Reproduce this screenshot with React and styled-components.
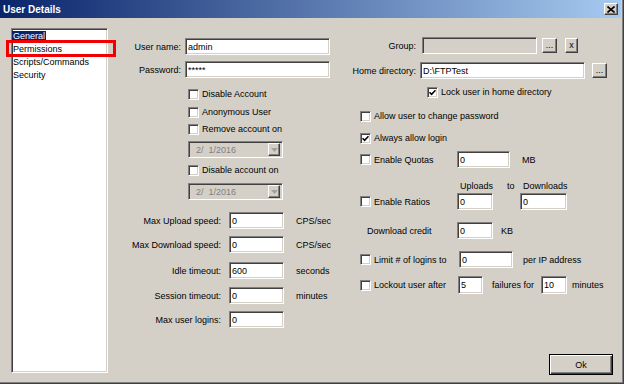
import React from 'react';
import styled, { createGlobalStyle, css } from 'styled-components';

const GlobalStyle = createGlobalStyle`
  body {
    margin: 0;
    background: #d4d0c8;
  }
  * {
    box-sizing: border-box;
  }
`;

//Classic 3D borders
const sunken = css`
  border: 1px solid;
  border-color: #808080 #ffffff #ffffff #808080;
  box-shadow: inset 1px 1px 0 #404040, inset -1px -1px 0 #d4d0c8;
`;
const raised = css`
  border: 1px solid;
  border-color: #ffffff #404040 #404040 #ffffff;
  box-shadow: inset -1px -1px 0 #808080, inset 1px 1px 0 #d4d0c8;
`;

const Window = styled.div`
  width: 624px;
  height: 384px;
  display: flex;
  flex-direction: column;
  background: #d4d0c8;
  font-family: "Liberation Sans", Arial, sans-serif;
  font-size: 9px;
  color: #000;
  box-shadow: inset -1px -1px 0 #404040, inset -2px -2px 0 #808080;
  overflow: hidden;
`;

const TitleBar = styled.div`
  height: 18px;
  flex: none;
  margin-right: 3px;
  padding: 0 3px 0 3px;
  display: flex;
  align-items: center;
  justify-content: space-between;
  background: linear-gradient(to right, #0a246a, #a6caf0);
`;

const Title = styled.span`
  color: #fff;
  font-weight: bold;
  font-size: 10px;
`;

const CloseButton = styled.div`
  ${raised};
  width: 14px;
  height: 12px;
  background: #d4d0c8;
  display: flex;
  align-items: center;
  justify-content: center;
`;

const Body = styled.div`
  flex: 1;
  display: flex;
  padding: 10px 11px 9px 11px;
`;

const Tree = styled.div`
  ${sunken};
  width: 97px;
  height: 345px;
  flex: none;
  background: #fff;
  padding-top: 1px;
`;

const TreeItem = styled.div`
  position: relative;
  height: 13px;
  line-height: 13px;
  white-space: nowrap;
  span {
    display: inline-block;
    line-height: 11px;
    padding: 0 1px;
    vertical-align: middle;
    background: ${p => (p.$selected ? '#0a246a' : 'transparent')};
    color: ${p => (p.$selected ? '#fff' : '#000')};
  }
`;

const Marker = styled.i`
  position: absolute;
  left: -6px;
  top: -3px;
  width: 110px;
  height: 17px;
  border: 3px solid #f00000;
  pointer-events: none;
`;

const Content = styled.div`
  flex: 1;
  margin-left: 10px;
  display: flex;
  flex-direction: column;
`;

const Columns = styled.div`
  display: flex;
`;

const Column = styled.div`
  width: ${p => (p.$w ? `${p.$w}px` : 'auto')};
  flex: ${p => (p.$w ? 'none' : '1')};
  display: flex;
  flex-direction: column;
`;

const Row = styled.div`
  display: flex;
  align-items: center;
  height: ${p => p.$h || 17}px;
  margin-top: ${p => p.$top || 0}px;
  padding-left: ${p => p.$indent || 0}px;
  white-space: nowrap;
`;

const Label = styled.span`
  flex: none;
  width: ${p => (p.$w ? `${p.$w}px` : 'auto')};
  margin-right: ${p => p.$gap || 0}px;
  text-align: ${p => (p.$right ? 'right' : 'left')};
`;

const TextBox = styled.input`
  ${sunken};
  flex: none;
  width: ${p => p.$w}px;
  height: ${p => p.$h || 17}px;
  margin: 0 ${p => p.$gap || 0}px 0 0;
  padding: 0 2px;
  background: ${p => (p.$disabled ? '#d4d0c8' : '#fff')};
  font: inherit;
  color: #000;
  outline: none;
`;

const SmallButton = styled.div`
  ${raised};
  flex: none;
  width: ${p => p.$w}px;
  height: 15px;
  margin-right: ${p => p.$gap || 0}px;
  display: flex;
  align-items: center;
  justify-content: center;
  line-height: 1;
`;

const CheckWrap = styled.label`
  flex: none;
  display: flex;
  align-items: center;
  width: ${p => (p.$w ? `${p.$w}px` : 'auto')};
`;

const Box = styled.span`
  ${sunken};
  width: 11px;
  height: 11px;
  margin-right: 3px;
  background: #fff;
  display: flex;
  align-items: center;
  justify-content: center;
`;

const Combo = styled.div`
  ${sunken};
  width: 95px;
  height: 17px;
  padding: 0 2px 0 7px;
  display: flex;
  align-items: center;
  justify-content: space-between;
  background: #d4d0c8;
  color: #808080;
  white-space: pre;
`;

const ComboButton = styled.div`
  ${raised};
  width: 12px;
  height: 13px;
  display: flex;
  align-items: center;
  justify-content: center;
`;

const Footer = styled.div`
  margin-top: auto;
  display: flex;
  justify-content: flex-end;
`;

const OkButton = styled.div`
  width: 64px;
  height: 21px;
  border: 1px solid #000;
  box-shadow: inset 1px 1px 0 #fff, inset -1px -1px 0 #404040, inset -2px -2px 0 #808080;
  display: flex;
  align-items: center;
  justify-content: center;
`;

const Check = ({ checked, w, children }) => (
  <CheckWrap $w={w}>
    <Box>
      {checked && (
        <svg width="7" height="7" viewBox="0 0 7 7">
          <path d="M0.5 3.2 L2.6 5.3 L6.5 1.2" fill="none" stroke="#000" strokeWidth="1.6" />
        </svg>
      )}
    </Box>
    {children}
  </CheckWrap>
);

const DateCombo = ({ value }) => (
  <Combo>
    {value}
    <ComboButton>
      <svg width="7" height="4" viewBox="0 0 7 4">
        <path d="M0 0 H7 L3.5 4 Z" fill="#a0a0a0" />
      </svg>
    </ComboButton>
  </Combo>
);

const Field = ({ value, ...rest }) => <TextBox readOnly value={value} {...rest} />;

const App = () => {
  return (
    <>
      <GlobalStyle />
      <Window>
        <TitleBar>
          <Title>User Details</Title>
          <CloseButton>
            <svg width="8" height="7" viewBox="0 0 8 7">
              <path d="M0.5 0.5 L7.5 6.5 M7.5 0.5 L0.5 6.5" stroke="#000" strokeWidth="1.6" />
            </svg>
          </CloseButton>
        </TitleBar>
        <Body>
          <Tree>
            <TreeItem $selected><span>General</span></TreeItem>
            <TreeItem><span>Permissions</span><Marker /></TreeItem>
            <TreeItem><span>Scripts/Commands</span></TreeItem>
            <TreeItem><span>Security</span></TreeItem>
          </Tree>
          <Content>
            <Columns>
              <Column $w={227}>
                <Row $top={10}>
                  <Label $w={63} $gap={4} $right>User name:</Label>
                  <Field $w={145} value="admin" />
                </Row>
                <Row $top={6}>
                  <Label $w={63} $gap={4} $right>Password:</Label>
                  <Field $w={145} value="*****" />
                </Row>
                <Row $top={8} $h={16} $indent={70}><Check>Disable Account</Check></Row>
                <Row $top={2} $h={16} $indent={70}><Check>Anonymous User</Check></Row>
                <Row $top={1} $h={16} $indent={70}><Check>Remove account on</Check></Row>
                <Row $top={4} $indent={70}><DateCombo value="2/  1/2016" /></Row>
                <Row $top={4} $h={16} $indent={70}><Check>Disable account on</Check></Row>
                <Row $top={5} $indent={70}><DateCombo value="2/  1/2016" /></Row>
                <Row $top={12}>
                  <Label $w={103} $gap={8} $right>Max Upload speed:</Label>
                  <Field $w={55} $gap={12} value="0" />
                  <Label>CPS/sec</Label>
                </Row>
                <Row $top={7}>
                  <Label $w={103} $gap={8} $right>Max Download speed:</Label>
                  <Field $w={55} $gap={12} value="0" />
                  <Label>CPS/sec</Label>
                </Row>
                <Row $top={9}>
                  <Label $w={103} $gap={8} $right>Idle timeout:</Label>
                  <Field $w={55} $gap={12} value="600" />
                  <Label>seconds</Label>
                </Row>
                <Row $top={8}>
                  <Label $w={103} $gap={8} $right>Session timeout:</Label>
                  <Field $w={55} $gap={12} value="0" />
                  <Label>minutes</Label>
                </Row>
                <Row $top={7}>
                  <Label $w={103} $gap={8} $right>Max user logins:</Label>
                  <Field $w={55} value="0" />
                </Row>
              </Column>

              <Column>
                <Row $top={9}>
                  <Label $w={71} $gap={6} $right>Group:</Label>
                  <Field $w={115} $gap={5} $disabled value="" />
                  <SmallButton $w={15} $gap={8}>...</SmallButton>
                  <SmallButton $w={13}>x</SmallButton>
                </Row>
                <Row $top={8}>
                  <Label $w={71} $gap={4} $right>Home directory:</Label>
                  <Field $w={165} $gap={7} value="D:\FTPTest" />
                  <SmallButton $w={15}>...</SmallButton>
                </Row>
                <Row $top={5} $h={16} $indent={82}><Check checked>Lock user in home directory</Check></Row>
                <Row $top={8} $h={16} $indent={15}><Check>Allow user to change password</Check></Row>
                <Row $top={6} $h={16} $indent={15}><Check checked>Always allow login</Check></Row>
                <Row $top={5} $indent={15}>
                  <Check w={97}>Enable Quotas</Check>
                  <Field $w={53} $gap={12} value="0" />
                  <Label>MB</Label>
                </Row>
                <Row $top={12} $h={12} $indent={115}>
                  <Label $w={47}>Uploads</Label>
                  <Label $w={16}>to</Label>
                  <Label>Downloads</Label>
                </Row>
                <Row $top={1} $indent={15}>
                  <Check w={97}>Enable Ratios</Check>
                  <Field $w={36} $gap={27} value="0" />
                  <Field $w={47} value="0" />
                </Row>
                <Row $top={12} $indent={22}>
                  <Label $w={90}>Download credit</Label>
                  <Field $w={36} $gap={8} value="0" />
                  <Label>KB</Label>
                </Row>
                <Row $top={12} $indent={15}>
                  <Check w={99}>Limit # of logins to</Check>
                  <Field $w={54} $gap={10} value="0" />
                  <Label>per IP address</Label>
                </Row>
                <Row $top={8} $h={18} $indent={15}>
                  <Check w={98}>Lockout user after</Check>
                  <Field $w={25} $h={18} $gap={9} value="5" />
                  <Label $w={49}>failures for</Label>
                  <Field $w={26} $h={18} $gap={5} value="10" />
                  <Label>minutes</Label>
                </Row>
              </Column>
            </Columns>
            <Footer>
              <OkButton>Ok</OkButton>
            </Footer>
          </Content>
        </Body>
      </Window>
    </>
  );
};

export default App;
